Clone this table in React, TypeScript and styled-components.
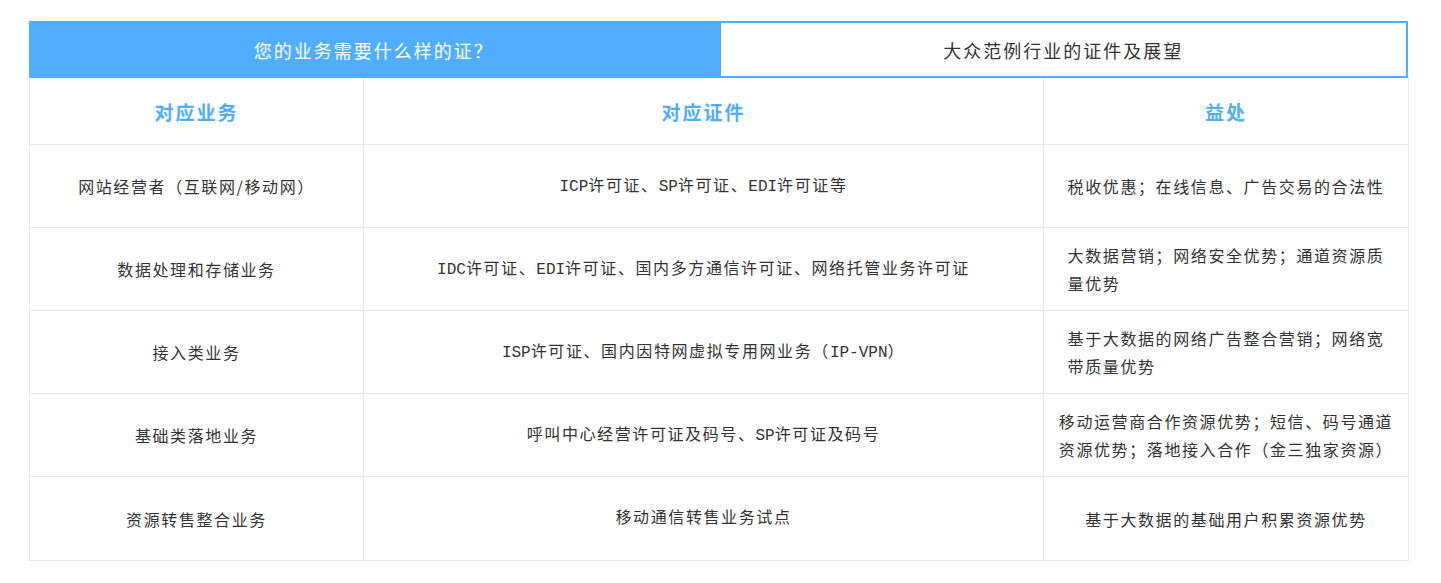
import React, { useState } from 'react';
import styled, { createGlobalStyle } from 'styled-components';

const GlobalStyle = createGlobalStyle`
  html, body {
    margin: 0;
    padding: 0;
    background: #fff;
  }
  body {
    font-family: "Noto Sans CJK SC", "Noto Sans", sans-serif;
    color: #333;
  }
`;

interface Row {
  business: string;
  license: string;
  benefit: string[];
}

const rows: Row[] = [
  {
    business: '网站经营者（互联网/移动网）',
    license: 'ICP许可证、SP许可证、EDI许可证等',
    benefit: ['税收优惠；在线信息、广告交易的合法性'],
  },
  {
    business: '数据处理和存储业务',
    license: 'IDC许可证、EDI许可证、国内多方通信许可证、网络托管业务许可证',
    benefit: ['大数据营销；网络安全优势；通道资源质', '量优势'],
  },
  {
    business: '接入类业务',
    license: 'ISP许可证、国内因特网虚拟专用网业务（IP-VPN）',
    benefit: ['基于大数据的网络广告整合营销；网络宽', '带质量优势'],
  },
  {
    business: '基础类落地业务',
    license: '呼叫中心经营许可证及码号、SP许可证及码号',
    benefit: ['移动运营商合作资源优势；短信、码号通道', '资源优势；落地接入合作（金三独家资源）'],
  },
  {
    business: '资源转售整合业务',
    license: '移动通信转售业务试点',
    benefit: ['基于大数据的基础用户积累资源优势'],
  },
];

const tabs = ['您的业务需要什么样的证？', '大众范例行业的证件及展望'];

// latin runs get their own span so the CJK letter-spacing doesn't stretch them
const renderMixed = (text: string) =>
  text.split(/([A-Za-z\-]+)/).map((part, i) =>
    /^[A-Za-z\-]+$/.test(part) ? <Latin key={i}>{part}</Latin> : <React.Fragment key={i}>{part}</React.Fragment>
  );

const App: React.FC = () => {
  const [active, setActive] = useState(0);
  return (
    <>
      <GlobalStyle />
      <Page>
        <Wrapper>
          <TabBar>
            {tabs.map((t, i) => (
              <Tab key={t} active={active === i} onClick={() => setActive(i)}>
                {t}
              </Tab>
            ))}
          </TabBar>
          <Table>
            <HeadCell>对应业务</HeadCell>
            <HeadCell>对应证件</HeadCell>
            <HeadCell>益处</HeadCell>
            {rows.map((r) => (
              <React.Fragment key={r.business}>
                <Cell>{r.business}</Cell>
                <Cell mono>{renderMixed(r.license)}</Cell>
                <Cell>
                  <Lines>
                    {r.benefit.map((line, i) => (
                      <React.Fragment key={i}>
                        {i > 0 && <br />}
                        {line}
                      </React.Fragment>
                    ))}
                  </Lines>
                </Cell>
              </React.Fragment>
            ))}
          </Table>
        </Wrapper>
      </Page>
    </>
  );
};

const Page = styled.div`
  padding: 21px 0 24px 29px;
`;

const Wrapper = styled.div`
  width: 1380px;
`;

const TabBar = styled.div`
  display: flex;
  width: 1379px;
  height: 57px;
`;

const Tab = styled.div<{ active: boolean }>`
  flex: 1;
  display: flex;
  align-items: center;
  justify-content: center;
  font-size: 18px;
  letter-spacing: 2px;
  cursor: pointer;
  background: ${(p) => (p.active ? '#51aeff' : '#fff')};
  color: ${(p) => (p.active ? '#fff' : '#333')};
  border: 2px solid #51aeff;
  box-sizing: border-box;
`;

const Table = styled.div`
  display: grid;
  grid-template-columns: 334px 680px 1fr;
  grid-template-rows: 67px repeat(5, 83px);
  border-left: 1px solid #e8e8e8;
  border-bottom: 1px solid #e8e8e8;
`;

const HeadCell = styled.div`
  display: flex;
  align-items: center;
  justify-content: center;
  font-size: 19px;
  font-weight: bold;
  letter-spacing: 2px;
  color: #51aeff;
  border-right: 1px solid #e8e8e8;
  border-bottom: 1px solid #e8e8e8;
`;

const Cell = styled.div<{ mono?: boolean }>`
  display: flex;
  align-items: center;
  justify-content: center;
  text-align: center;
  font-size: 16px;
  letter-spacing: 1.6px;
  line-height: 28px;
  color: #333;
  padding-top: ${(p) => (p.mono ? '1px' : '0')};
  font-family: ${(p) =>
    p.mono
      ? '"Liberation Mono", "Noto Sans CJK SC", monospace'
      : '"Noto Sans CJK SC", "Noto Sans", sans-serif'};
  border-right: 1px solid #e8e8e8;
  border-bottom: 1px solid #e8e8e8;
  &:nth-last-child(-n + 3) {
    border-bottom: none;
  }
`;

const Latin = styled.span`
  letter-spacing: 0;
`;

const Lines = styled.span`
  display: inline-block;
  text-align: left;
`;

export default App;
